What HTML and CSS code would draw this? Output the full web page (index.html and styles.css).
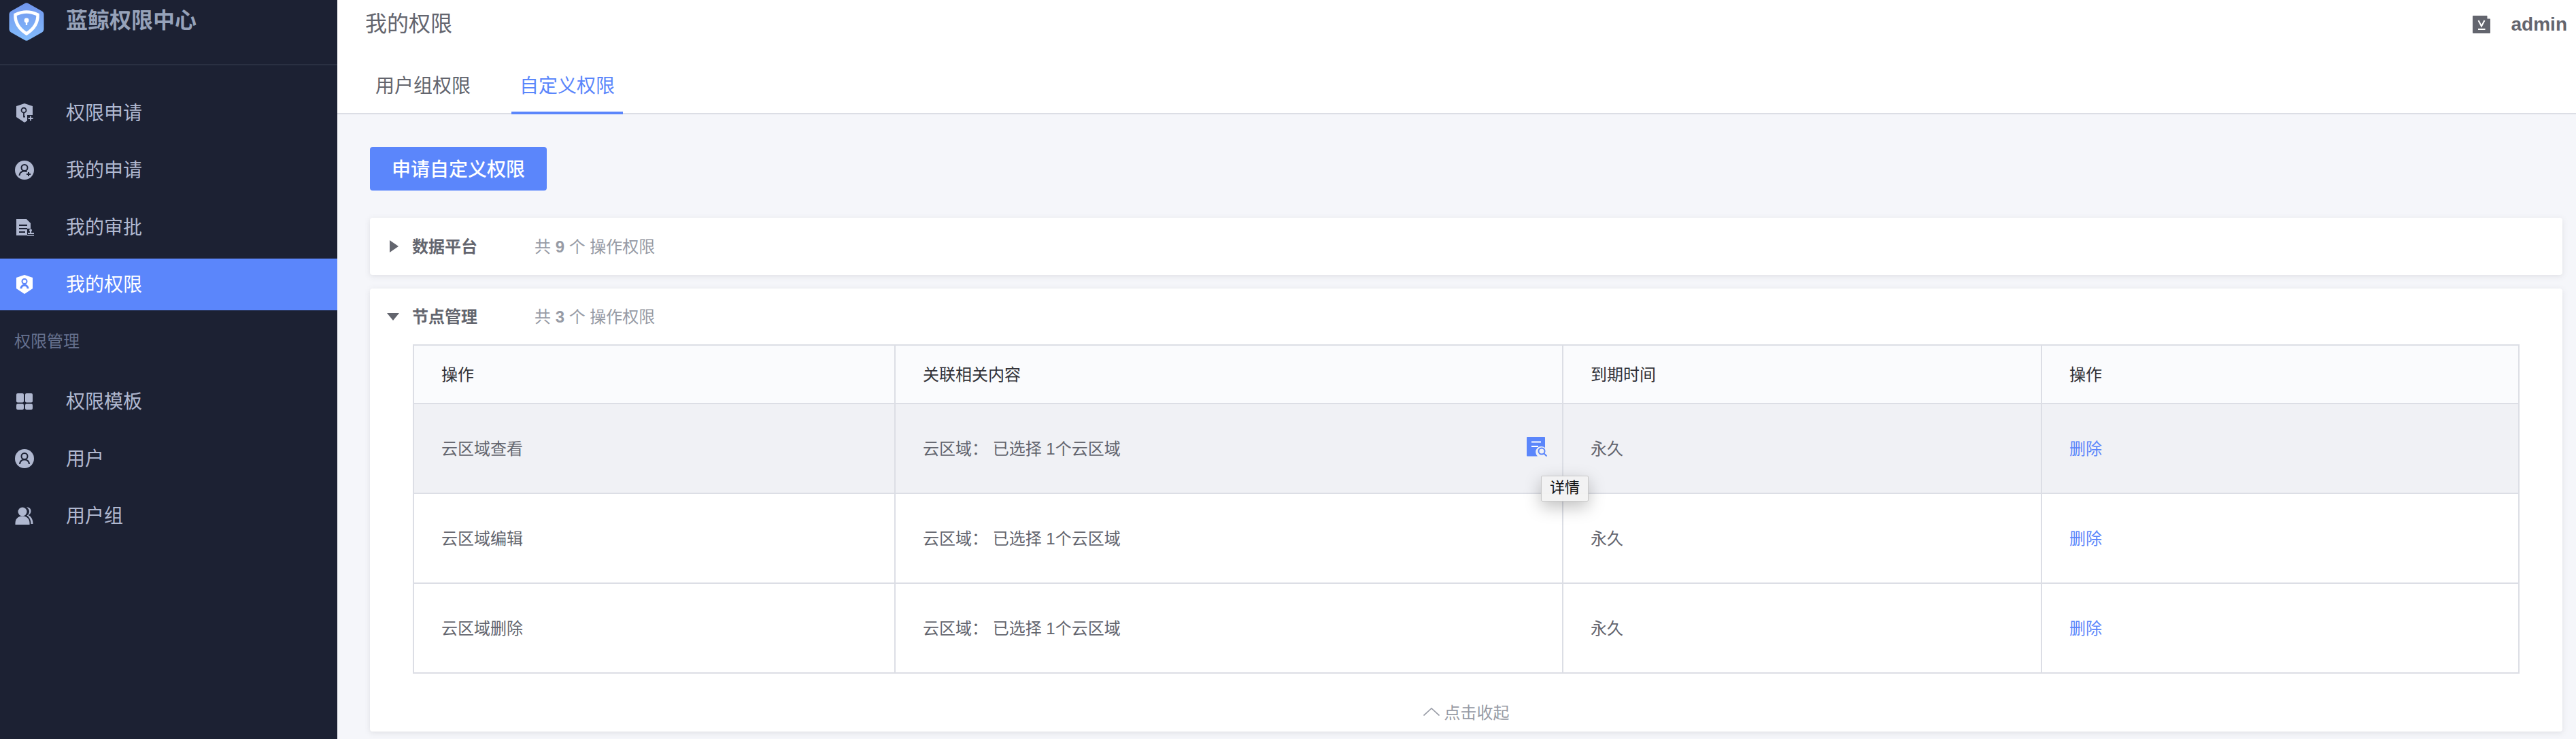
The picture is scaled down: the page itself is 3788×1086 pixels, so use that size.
FILE: index.html
```html
<!DOCTYPE html>
<html lang="zh-CN">
  <head>
    <meta charset="utf-8" />
    <title>蓝鲸权限中心</title>
    <link rel="stylesheet" href="styles.css">
  </head>
  <body>
    <div class="app">
      <!-- Sidebar -->
      <aside class="sidebar">
        <div class="brand">
          <svg class="brand-logo" viewBox="0 0 52 56">
            <defs>
              <linearGradient id="logo-bg" x1="0" y1="0" x2="0" y2="1">
                <stop offset="0" stop-color="#7196ef" />
                <stop offset="1" stop-color="#83bcfb" />
              </linearGradient>
            </defs>
            <path d="M23 1.2a6 6 0 0 1 6 0l19.5 11a6 6 0 0 1 3 5.2v21.2a6 6 0 0 1-3 5.2l-19.5 11a6 6 0 0 1-6 0l-19.5-11a6 6 0 0 1-3-5.2V17.400a6 6 0 0 1 3-5.2z" fill="url(#logo-bg)" />
            <path d="M26 13.500c6 0 11 1.500 16.500 4 .5 11-4 20-16.500 28C13.500 37.500 9 28.500 9.500 17.500c5.500-2.500 10.500-4 16.500-4z" fill="none" stroke="#fff" stroke-width="4.500" />
            <circle cx="26" cy="26" r="3.400" fill="#fff" />
            <rect x="24.800" y="27" width="2.400" height="6" fill="#fff" />
          </svg>
          <span class="brand-name">蓝鲸权限中心</span>
        </div>
        <nav class="nav">
          <a class="nav-item">
            <svg class="nav-icon" viewBox="0 0 28 28">
              <path d="M14 0l12 4v16l-12 8-12-8V4z" fill="#b0b8d0" />
              <circle cx="13" cy="10" r="3.500" fill="none" stroke="#1c2133" stroke-width="1.800" />
              <path d="M13 13.500v6h2" fill="none" stroke="#1c2133" stroke-width="1.800" />
              <rect x="18" y="17" width="10" height="11" fill="#1c2133" />
              <path d="M23 18.500v7M19.500 22h7" stroke="#b0b8d0" stroke-width="1.800" />
            </svg>
            <span>权限申请</span>
          </a>
          <a class="nav-item">
            <svg class="nav-icon" viewBox="0 0 28 28">
              <circle cx="14" cy="14" r="14" fill="#b0b8d0" />
              <circle cx="14" cy="10.500" r="4.500" fill="none" stroke="#1c2133" stroke-width="2" />
              <path d="M6.500 22c.5-4 3.500-6.500 7.500-6.500 1.500 0 2.500.3 3.500.8" fill="none" stroke="#1c2133" stroke-width="2" />
              <path d="M20 17v6M17 20h6" stroke="#1c2133" stroke-width="2" />
            </svg>
            <span>我的申请</span>
          </a>
          <a class="nav-item">
            <svg class="nav-icon" viewBox="0 0 28 28">
              <path d="M2 2h15l6 6v8h-5v10H2z" fill="#b0b8d0" />
              <path d="M6 11h12M6 16h12M6 21h9" stroke="#1c2133" stroke-width="2" />
              <circle cx="23" cy="18.500" r="2" fill="#b0b8d0" />
              <path d="M22 20h2v2h4v2h-9v-2h3zM18 25h10v1.500H18z" fill="#b0b8d0" />
            </svg>
            <span>我的审批</span>
          </a>
          <a class="nav-item active">
            <svg class="nav-icon" viewBox="0 0 28 28">
              <path d="M14 0l12 4v16l-12 8-12-8V4z" fill="#fff" />
              <circle cx="14" cy="9.500" r="3.500" fill="none" stroke="#5b86fb" stroke-width="2" />
              <path d="M7.500 20c0-3.500 3-6.500 6.500-6.500s6.500 3 6.500 6.500h-3c0-2-1.500-3.500-3.500-3.500s-3.500 1.500-3.500 3.500z" fill="#5b86fb" />
            </svg>
            <span>我的权限</span>
          </a>
          <div class="nav-label">权限管理</div>
          <a class="nav-item">
            <svg class="nav-icon" viewBox="0 0 28 28">
              <rect x="2" y="2" width="11" height="13.500" rx="2" fill="#b0b8d0" />
              <rect x="15" y="2" width="11" height="13.500" rx="2" fill="#b0b8d0" />
              <rect x="2" y="17.500" width="11" height="8.500" rx="2" fill="#b0b8d0" />
              <rect x="15" y="17.500" width="11" height="8.500" rx="2" fill="#b0b8d0" />
            </svg>
            <span>权限模板</span>
          </a>
          <a class="nav-item">
            <svg class="nav-icon" viewBox="0 0 28 28">
              <circle cx="14" cy="14" r="14" fill="#b0b8d0" />
              <circle cx="14" cy="10.500" r="4.500" fill="none" stroke="#1c2133" stroke-width="2" />
              <path d="M7 22c.5-4 3-6.500 7-6.500s6.500 2.500 7 6.500" fill="none" stroke="#1c2133" stroke-width="2" />
            </svg>
            <span>用户</span>
          </a>
          <a class="nav-item">
            <svg class="nav-icon" viewBox="0 0 28 28">
              <circle cx="11" cy="8" r="6.500" fill="#b0b8d0" />
              <path d="M.5 27c-.5-8 3-12.500 10.500-12.500S22 19 21.500 27z" fill="#b0b8d0" />
              <path d="M17 1.500c4-.5 6.500 2 6.500 5.500 0 3-1.500 5-4 6 4 1.500 7 6 7 13h-3c0-5-2-10-6-12.500 2.500-1.500 3.500-3.500 3.500-6 0-2.500-1.500-4.500-4-6z" fill="#b0b8d0" />
            </svg>
            <span>用户组</span>
          </a>
        </nav>
      </aside>

      <!-- Main -->
      <main class="main">
        <header class="page-header">
          <div class="page-top">
            <h1 class="page-title">我的权限</h1>
            <div class="user">
              <svg class="user-icon" viewBox="0 0 26 26">
                <path d="M1 0h20l5 5v20a1 1 0 0 1-1 1H1a1 1 0 0 1-1-1V1a1 1 0 0 1 1-1z" fill="#63656e" />
                <path d="M8.500 7l4.500 8.500L17.500 7" fill="none" stroke="#fff" stroke-width="2" />
                <path d="M8 20h10.500" stroke="#fff" stroke-width="2" />
                <path d="M21.500 0l4.500 4.500h-4.500z" fill="#fff" />
              </svg>
              <span class="user-name">admin</span>
            </div>
          </div>
          <div class="tabs">
            <a class="tab">用户组权限</a>
            <a class="tab active">自定义权限</a>
          </div>
        </header>

        <div class="content">
          <button class="btn-primary">申请自定义权限</button>

          <section class="card">
            <div class="card-head">
              <span class="arrow-right"></span>
              <span class="card-title">数据平台</span>
              <span class="card-count">共 <b>9</b> 个 操作权限</span>
            </div>
          </section>

          <section class="card">
            <div class="card-head open">
              <span class="arrow-down"></span>
              <span class="card-title">节点管理</span>
              <span class="card-count">共 <b>3</b> 个 操作权限</span>
            </div>
            <table class="perm-table">
              <thead>
                <tr>
                  <th class="col-name">操作</th>
                  <th class="col-rel">关联相关内容</th>
                  <th class="col-time">到期时间</th>
                  <th>操作</th>
                </tr>
              </thead>
              <tbody>
                <tr class="hover">
                  <td>云区域查看</td>
                  <td>
                    <div class="rel-cell">
                      <span>云区域： 已选择 1个云区域</span>
                      <svg class="detail-icon" viewBox="0 0 30 30">
                        <path d="M1 0h25a1 1 0 0 1 1 1v15a8 8 0 0 0-11 12.500H1a1 1 0 0 1-1-1V1a1 1 0 0 1 1-1z" fill="#5b86fb" />
                        <path d="M7 7.500h14M7 14h10" stroke="#fff" stroke-width="1.800" />
                        <circle cx="22" cy="21" r="4.500" fill="none" stroke="#5b86fb" stroke-width="2" />
                        <path d="M25.500 24.500L29.500 28.500" stroke="#5b86fb" stroke-width="2" />
                      </svg>
                      <span class="tooltip">详情</span>
                    </div>
                  </td>
                  <td>永久</td>
                  <td><a class="link">删除</a></td>
                </tr>
                <tr>
                  <td>云区域编辑</td>
                  <td>云区域： 已选择 1个云区域</td>
                  <td>永久</td>
                  <td><a class="link">删除</a></td>
                </tr>
                <tr>
                  <td>云区域删除</td>
                  <td>云区域： 已选择 1个云区域</td>
                  <td>永久</td>
                  <td><a class="link">删除</a></td>
                </tr>
              </tbody>
            </table>
            <div class="card-foot">
              <svg class="chevron" viewBox="0 0 24 12">
                <path d="M.5 11.500L12 1l11.500 10.500" fill="none" stroke="#979ba5" stroke-width="1.600" />
              </svg>
              <span>点击收起</span>
            </div>
          </section>
        </div>
      </main>
    </div>
  </body>
</html>
```

FILE: styles.css
```css
* {
  box-sizing: border-box;
}

html, body {
  height: 100%;
}

body {
  margin: 0;
  overflow: hidden;
  background: #f5f6fa;
  font-family: "Liberation Sans", "Noto Sans CJK SC", sans-serif;
  color: #63656e;
}

.app {
  display: flex;
  height: 100%;
}

/* Sidebar */
.sidebar {
  width: 496px;
  flex-shrink: 0;
  background: #1c2133;
}

.brand {
  display: flex;
  align-items: flex-start;
  height: 96px;
  padding: 4px 0 0 13px;
  border-bottom: 2px solid #2a3042;
}

.brand-logo {
  width: 52px;
  height: 56px;
  margin-right: 32px;
}

.brand-name {
  font-size: 32px;
  line-height: 52px;
  font-weight: 700;
  color: #96a2b9;
}

.nav {
  padding-top: 32px;
}

.nav-item {
  display: flex;
  align-items: center;
  height: 76px;
  margin-bottom: 8px;
  padding-left: 22px;
  font-size: 28px;
  color: #b0b8d0;
}

.nav-item span {
  margin-bottom: 4px;
}

.nav-item.active {
  background: #5b86fb;
  color: #fff;
}

.nav-icon {
  width: 28px;
  height: 28px;
  margin-right: 47px;
}

.nav-label {
  height: 88px;
  padding: 0 0 8px 21px;
  font-size: 24px;
  line-height: 76px;
  color: #66718f;
}

/* Main */
.main {
  flex: 1;
  min-width: 0;
}

.page-header {
  height: 168px;
  background: #fff;
  border-bottom: 2px solid #dcdee5;
}

.page-top {
  display: flex;
  justify-content: space-between;
  align-items: center;
  height: 68px;
  padding: 0 13px 4px 41px;
}

.page-title {
  margin: 0;
  font-size: 32px;
  font-weight: 400;
  color: #63656e;
}

.user {
  display: flex;
  align-items: center;
  margin-top: 8px;
}

.user-icon {
  width: 26px;
  height: 26px;
  margin-right: 31px;
}

.user-name {
  font-size: 28px;
  font-weight: 700;
}

.tabs {
  display: flex;
  gap: 48px;
  padding-left: 44px;
}

.tab {
  width: 164px;
  height: 100px;
  line-height: 118px;
  text-align: center;
  font-size: 28px;
  white-space: nowrap;
}

.tab.active {
  height: 100px;
  color: #5b86fb;
  border-bottom: 4px solid #5b86fb;
}

.content {
  display: flex;
  flex-direction: column;
  align-items: flex-start;
  gap: 20px;
  padding: 48px 20px 0 48px;
}

.btn-primary {
  width: 260px;
  height: 64px;
  margin-bottom: 20px;
  padding: 0 0 2px;
  border: none;
  border-radius: 4px;
  background: #5b86fb;
  color: #fff;
  font-family: inherit;
  font-size: 28px;
  font-weight: 500;
}

.card {
  width: 100%;
  background: #fff;
  border-radius: 4px;
  box-shadow: 0 2px 8px rgba(99, 101, 110, 0.15);
}

.card-head {
  display: flex;
  align-items: center;
  height: 84px;
  padding-left: 25px;
  font-size: 24px;
}

.card-head.open {
  height: 82px;
}

.arrow-right {
  width: 0;
  height: 0;
  margin-right: 20px;
  margin-left: 4px;
  border-left: 13px solid #63656e;
  border-top: 9px solid transparent;
  border-bottom: 9px solid transparent;
}

.arrow-down {
  width: 0;
  height: 0;
  margin-right: 19px;
  border-top: 11px solid #63656e;
  border-left: 9px solid transparent;
  border-right: 9px solid transparent;
}

.card-title {
  width: 180px;
  margin-bottom: 4px;
  font-weight: 700;
}

.card-count {
  margin-bottom: 4px;
  color: #979ba5;
}

/* Table */
.perm-table {
  width: 3098px;
  margin-left: 63px;
  table-layout: fixed;
  border-collapse: collapse;
  font-size: 24px;
}

.perm-table th,
.perm-table td {
  padding: 0 0 4px 40px;
  border: 2px solid #dcdee5;
  text-align: left;
  font-weight: 400;
}

.perm-table th {
  height: 86px;
  background: #fafbfd;
  color: #313238;
}

.perm-table td {
  height: 132px;
}

.perm-table .hover td {
  background: #f0f1f5;
}

.col-name {
  width: 708px;
}

.col-rel {
  width: 982px;
}

.col-time {
  width: 704px;
}

.rel-cell {
  position: relative;
  display: flex;
  justify-content: space-between;
  align-items: center;
  padding-right: 22px;
}

.detail-icon {
  width: 30px;
  height: 30px;
}

.tooltip {
  position: absolute;
  top: 59px;
  right: -39px;
  width: 70px;
  height: 38px;
  background: rgba(242, 242, 242, 0.92);
  border: 1px solid #c8c8c8;
  border-radius: 2px;
  box-shadow: 0 8px 24px rgba(0, 0, 0, 0.25);
  color: #111;
  font-size: 22px;
  line-height: 34px;
  text-align: center;
}

.link {
  color: #5b86fb;
}

.card-foot {
  display: flex;
  justify-content: center;
  align-items: center;
  gap: 7px;
  height: 85px;
  padding: 26px 0 0 0;
  font-size: 24px;
  color: #979ba5;
}

.chevron {
  width: 24px;
  height: 12px;
}
```
